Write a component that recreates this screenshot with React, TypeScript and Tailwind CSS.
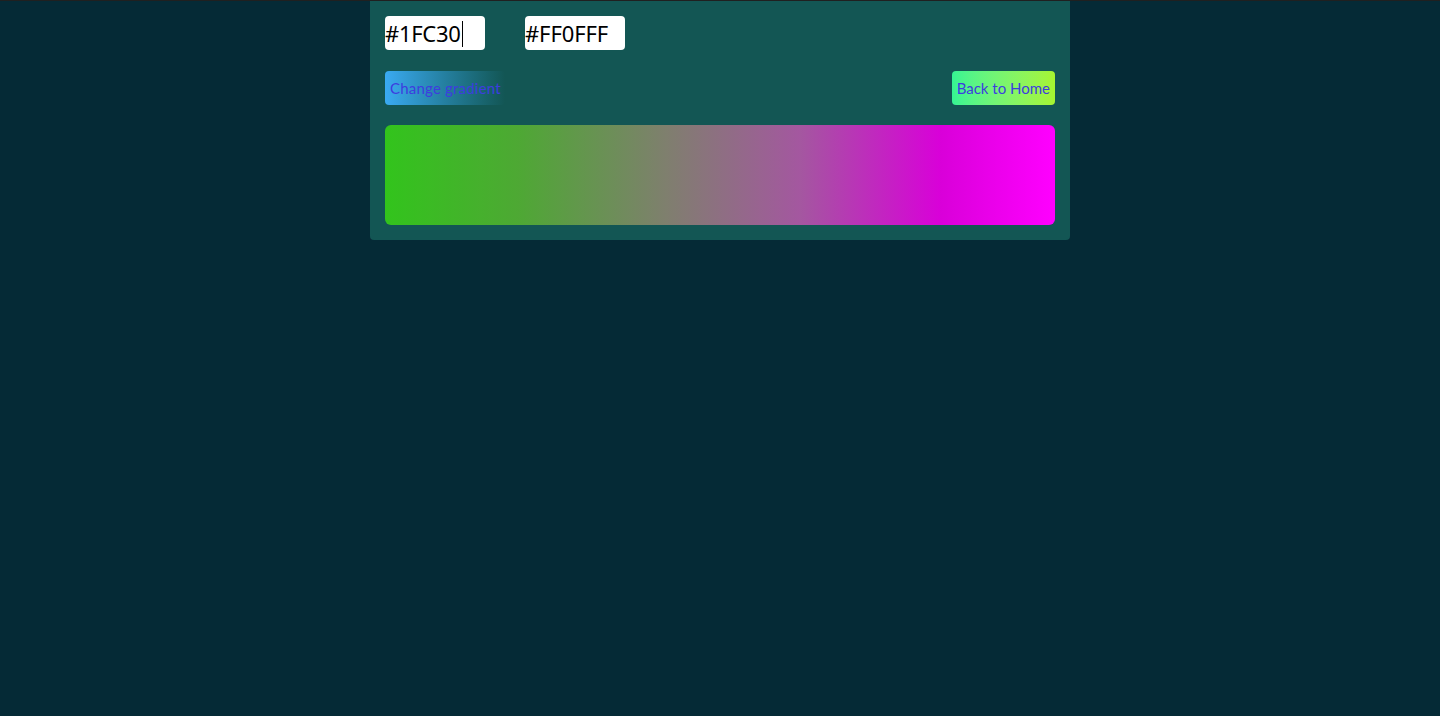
export default function App() {
  return (
    <div className="min-h-[716px] w-full bg-[#052a36] border-t border-[#202020]" style={{ fontFamily: "Lato, 'Open Sans', sans-serif" }}>
      <div className="mx-auto w-[700px] rounded-b-[4px] bg-[#135654] p-[15px]">
        <div className="flex gap-[40px]">
          <div className="flex h-[34px] w-[100px] items-center rounded-[4px] bg-white text-[22px] tracking-[-0.3px] text-black" style={{ fontFamily: "'Noto Sans', sans-serif" }}>
            <span>#1FC30</span>
            <span className="ml-[1px] mt-[2px] h-[26px] w-[1px] bg-black" />
          </div>
          <div className="flex h-[34px] w-[100px] items-center rounded-[4px] bg-white text-[22px] tracking-[-0.1px] text-black" style={{ fontFamily: "'Noto Sans', sans-serif" }}>
            <span>#FF0FFF</span>
          </div>
        </div>
        <div className="mt-[21px] flex items-center justify-between">
          <button className="h-[34px] w-[120px] rounded-[4px] bg-gradient-to-r from-[#3aaaf2] to-[#135654] pl-[5px] text-left text-[15px] tracking-[0.2px] text-[#3d3ddf]">
            Change gradient
          </button>
          <button className="h-[34px] rounded-[4px] bg-gradient-to-r from-[#34f593] to-[#a6f52f] px-[5px] text-[15px] text-[#3d3ddf]">
            Back to Home
          </button>
        </div>
        <div
          className="mt-[20px] h-[100px] w-full rounded-[6px] bg-[linear-gradient(to_right,#32c41c_0%,#4ea834_20%,#7f7f6e_42%,#a457a0_62%,#d900d9_83%,#ff00ff_100%)]"
        />
      </div>
    </div>
  );
}
